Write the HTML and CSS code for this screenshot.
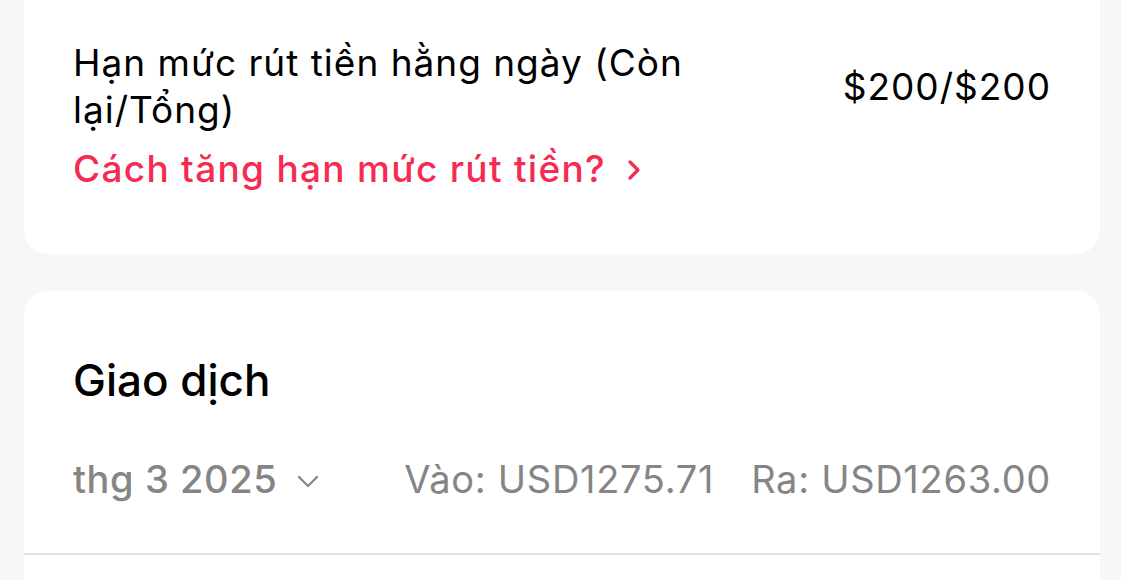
FILE: index.html
```html
<!DOCTYPE html>
<html lang="vi">
<head>
    <meta charset="UTF-8">
    <meta name="viewport" content="width=device-width, initial-scale=1.0">
    <title>Hạn mức và giao dịch</title>
    <link rel="stylesheet" href="styles.css">
</head>
<body>
    <div class="page">
        <section class="card limit-card">
            <div class="limit-row">
                <div class="limit-label">Hạn mức rút tiền hằng ngày (Còn lại/Tổng)</div>
                <div class="limit-value">$200/$200</div>
            </div>
            <a href="#" class="limit-link">
                Cách tăng hạn mức rút tiền?
                <svg class="link-arrow" viewBox="0 0 16 24" width="16" height="24">
                    <path d="M4 4 L12 12 L4 20" fill="none" stroke="currentColor" stroke-width="3.2" stroke-linecap="round" stroke-linejoin="round"/>
                </svg>
            </a>
        </section>

        <section class="card tx-card">
            <h2 class="tx-title">Giao dịch</h2>
            <div class="tx-summary">
                <button class="month-picker">
                    thg 3 2025
                    <svg class="month-arrow" viewBox="0 0 22 13" width="22" height="13">
                        <path d="M2 2 L11 11 L20 2" fill="none" stroke="currentColor" stroke-width="2.2" stroke-linecap="round" stroke-linejoin="round"/>
                    </svg>
                </button>
                <div class="tx-totals">
                    <span>Vào: USD1275.71</span>
                    <span>Ra: USD1263.00</span>
                </div>
            </div>
            <div class="tx-list"></div>
        </section>
    </div>
</body>
</html>
```

FILE: styles.css
```css
body {
    margin: 0;
    padding: 0;
    background-color: #f7f7f7;
    font-family: Inter, "Noto Sans", sans-serif;
    color: #000;
}
.page {
    padding: 0 21px 0 24px;
}
.card {
    background-color: #fff;
    border-radius: 24px;
}
.limit-card {
    margin-top: -30px;
    padding: 69px 49px 63px 49px;
}
.limit-row {
    display: flex;
    align-items: center;
}
.limit-label {
    flex: 1;
    max-width: 680px;
    font-size: 37px;
    line-height: 47px;
    letter-spacing: 1px;
}
.limit-value {
    margin-left: auto;
    font-size: 37px;
    letter-spacing: 1px;
}
.limit-link {
    display: inline-flex;
    align-items: center;
    gap: 20px;
    margin-top: 13px;
    color: #f52b52;
    text-decoration: none;
    font-size: 37px;
    font-weight: 500;
    letter-spacing: 1.3px;
}
.link-arrow {
    margin-top: 2px;
}
.tx-card {
    margin-top: 37px;
    padding-top: 62px;
    border-radius: 24px 24px 0 0;
}
.tx-title {
    margin: 0;
    padding: 0 49px;
    font-size: 44px;
    font-weight: 500;
}
.tx-summary {
    display: flex;
    align-items: center;
    padding: 49px 49px 51px 49px;
    border-bottom: 2px solid #e2e2e2;
    color: #858585;
}
.month-picker {
    display: inline-flex;
    align-items: center;
    gap: 20px;
    padding: 0;
    border: none;
    background: none;
    color: inherit;
    font-family: inherit;
    font-size: 38px;
    font-weight: 500;
    letter-spacing: 0.6px;
}
.month-arrow {
    margin-top: 4px;
}
.tx-totals {
    display: flex;
    gap: 37px;
    margin-left: auto;
    font-size: 38px;
    letter-spacing: 0.7px;
}
.tx-list {
    height: 27px;
}
```
